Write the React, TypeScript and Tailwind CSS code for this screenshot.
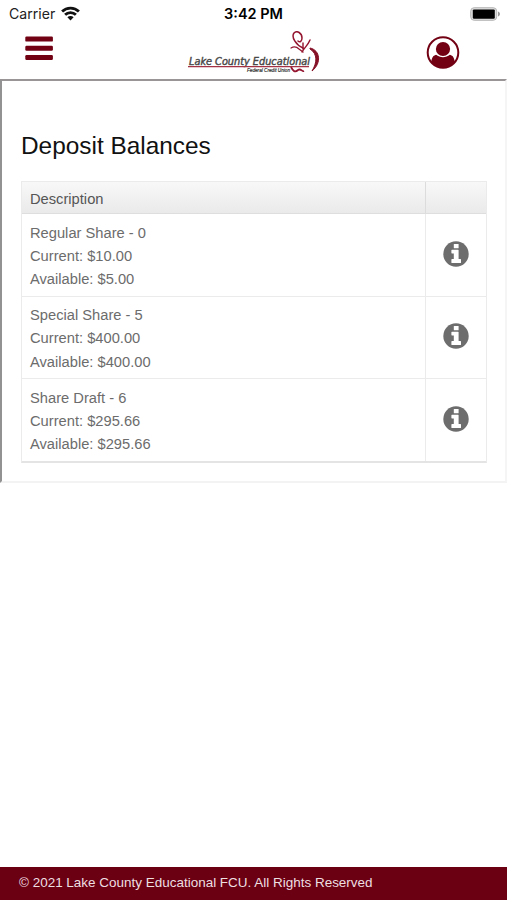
const accounts = [
  { name: "Regular Share - 0", current: "$10.00", available: "$5.00" },
  { name: "Special Share - 5", current: "$400.00", available: "$400.00" },
  { name: "Share Draft - 6", current: "$295.66", available: "$295.66" },
];

export default function App() {
  return (
    <div className="flex h-screen w-full flex-col overflow-hidden bg-white font-['Liberation_Sans',Arial,sans-serif]">
      <StatusBar />

      <header className="flex h-[51px] shrink-0 items-start justify-between pl-[25px] pr-[47px]">
        <button aria-label="Menu" className="mt-2">
          <svg width="28" height="25" viewBox="0 0 28 25" fill="#710113">
            <rect x="0.3" y="0.6" width="27.6" height="5" rx="1.2" />
            <rect x="0.3" y="9.8" width="27.6" height="5" rx="1.2" />
            <rect x="0.3" y="19" width="27.6" height="5" rx="1.2" />
          </svg>
        </button>
        <Logo />
        <button aria-label="Profile" className="mt-2">
          <UserIcon />
        </button>
      </header>

      <main className="h-[404px] shrink-0 border-2 border-b-[#f3f3f3] border-l-[#929292] border-r-[#f5f5f5] border-t-[#999596] pl-[19px] pr-[18px] pt-[49px]">
        <h1 className="h-[51px] text-[24.4px] leading-[32px] text-[#111]">Deposit Balances</h1>

        <div className="border border-b-2 border-[#ebebeb] border-b-[#e4e4e4]">
          <div className="flex h-8 border-b border-[#dedede] bg-linear-to-b from-[#f8f8f8] to-[#eaeaea]">
            <div className="flex-1 pl-2 text-[14.7px] leading-[34px] text-[#555]">Description</div>
            <div className="w-[61px] border-l border-[#dcdcdc]" />
          </div>
          {accounts.map((account) => (
            <AccountRow key={account.name} {...account} />
          ))}
        </div>
      </main>

      <footer className="mt-auto h-[33px] shrink-0 bg-[#6b0012] pl-[19px] text-[13.47px] leading-[31px] text-[#eedfe1]">
        © 2021 Lake County Educational FCU. All Rights Reserved
      </footer>
    </div>
  );
}

function AccountRow({ name, current, available }: { name: string; current: string; available: string }) {
  return (
    <div className="flex h-[82.5px] border-b border-[#ebebeb] last:h-[82px] last:border-b-0">
      <div className="flex-1 pl-2 pt-[7.6px] text-[14.7px] leading-[23.2px] text-[#6c6c6c]">
        <p>{name}</p>
        <p>Current: {current}</p>
        <p>Available: {available}</p>
      </div>
      <div className="flex w-[61px] items-center justify-center border-l border-[#ebebeb] pb-0.5">
        <InfoIcon />
      </div>
    </div>
  );
}

function StatusBar() {
  return (
    <div className="grid h-7 shrink-0 grid-cols-3 items-center pb-px font-[Inter,sans-serif] text-black">
      <div className="flex items-center gap-[6px] pl-[9px] text-[14.1px] text-[#222]">
        Carrier
        <svg width="19" height="15" viewBox="0 0 19 15" fill="none" stroke="#111" strokeWidth="2.8">
          <path d="M1.1 5.5a12 12 0 0 1 16.8 0" />
          <path d="M4.1 8.8a7.6 7.6 0 0 1 10.8 0" />
          <path d="M9.5 14.4 6.4 11.3a4.4 4.4 0 0 1 6.2 0z" fill="#111" stroke="none" />
        </svg>
      </div>
      <div className="text-center text-[14.5px] font-semibold">3:42 PM</div>
      <div className="flex justify-end pr-[6px]">
        <svg width="31" height="14" viewBox="0 0 31 14">
          <rect x="0.7" y="0.7" width="26" height="12.6" rx="3.5" fill="#ddd" stroke="#b5b5b5" />
          <rect x="2.8" y="2.4" width="22" height="9.4" rx="1.2" fill="#000" />
          <path d="M28 4.5c2.6.8 2.6 4.2 0 5z" fill="#999" />
        </svg>
      </div>
    </div>
  );
}

function InfoIcon() {
  return (
    <svg width="26" height="26" viewBox="0 0 26 26">
      <circle cx="13" cy="13" r="12.7" fill="#6d6d6d" />
      <g fill="#fff">
        <rect x="10.8" y="3.1" width="4.8" height="4.1" rx="0.5" />
        <path d="M9 8.7h6.1c.3 0 .5.2.5.5v8.7h1.8c.4 0 .6.2.6.5v3.1c0 .4-.2.6-.6.6H9c-.4 0-.6-.2-.6-.6v-3.1c0-.3.2-.5.6-.5h1.8v-5.5H9c-.4 0-.6-.2-.6-.5V9.2c0-.3.2-.5.6-.5z" />
      </g>
    </svg>
  );
}

function UserIcon() {
  return (
    <svg width="34" height="34" viewBox="0 0 34 34">
      <circle cx="17" cy="16.5" r="15.3" fill="#fff" stroke="#710113" strokeWidth="2" />
      <circle cx="17" cy="13" r="7.1" fill="#710113" />
      <path
        d="M5.3 26c.4-4.2 1.5-6.4 4.8-7.3 4 3.3 9.8 3.3 13.8 0 3.3.9 4.4 3.1 4.8 7.3A15 15 0 0 1 5.3 26z"
        fill="#710113"
      />
    </svg>
  );
}

function Logo() {
  return (
    <svg width="134" height="46" viewBox="0 0 134 46" className="ml-[31px] mt-[3px]" fill="none">
      <text
        x="1"
        y="34.3"
        fontSize="9.6"
        fill="#484848"
        stroke="#484848"
        strokeWidth="0.4"
        fontFamily="'DejaVu Sans', sans-serif"
        fontStyle="italic"
        textLength="121"
        lengthAdjust="spacingAndGlyphs"
      >
        Lake County Educational
      </text>
      <path d="M0 35.6h121" stroke="#a33245" strokeWidth="1.2" />
      <text
        x="59"
        y="41"
        fontSize="5"
        fill="#222"
        stroke="#222"
        strokeWidth="0.15"
        fontFamily="'Liberation Sans', sans-serif"
        fontStyle="italic"
        textLength="43"
        lengthAdjust="spacingAndGlyphs"
      >
        Federal Credit Union
      </text>
      <g stroke="#94152f" strokeLinecap="round">
        <path d="M115 17C108 14 103 6 106 2c3-3 8 0 8 5 0 3-2 5-4 3" strokeWidth="1.5" />
        <path d="M103 17c3-2 6-1 8 1l4 3" strokeWidth="1.3" />
        <path d="M115 12v6M122 9c-2 5-5 7-8 12" strokeWidth="1.4" />
      </g>
      <path d="M122 17c10 2 12 15 2 23 5-8 6-17-2-22z" fill="#851127" stroke="#851127" />
      <path d="M103 36c2 4 4 6 7 3 3-2 4 2 6 1" stroke="#94152f" strokeWidth="1.8" />
    </svg>
  );
}
